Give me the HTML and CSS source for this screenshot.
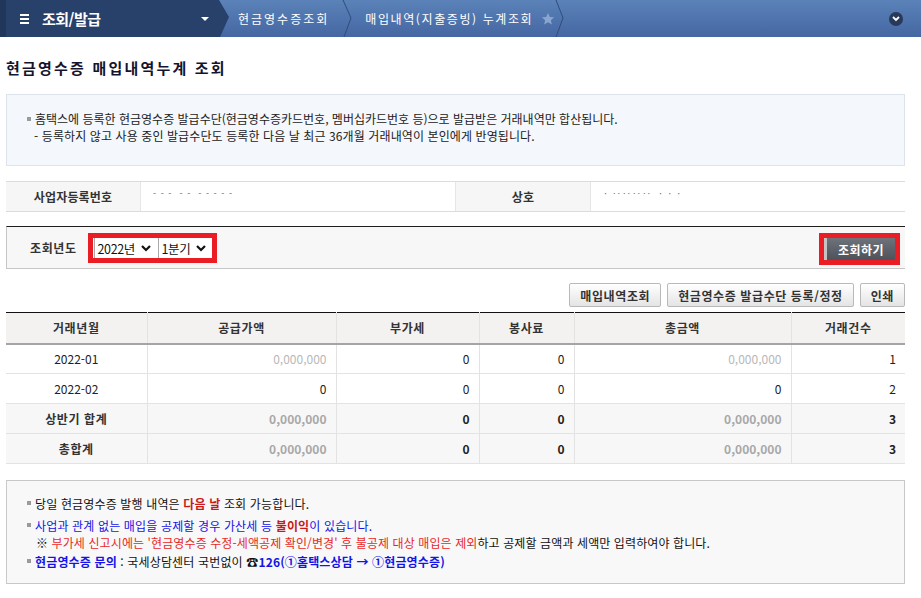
FILE: index.html
```html
<!DOCTYPE html>
<html lang="ko">
<head>
<meta charset="utf-8">
<title>현금영수증 매입내역누계 조회</title>
<link rel="stylesheet" href="styles.css">
</head>
<body>
<header class="topbar">
  <div class="menu">
    <span class="burger"><i></i><i></i><i></i></span>
    <span class="menu-title">조회/발급</span>
    <span class="menu-caret"></span>
  </div>
  <nav class="crumbs">
    <span class="crumb">현금영수증조회</span>
    <svg class="sep sep1" width="12" height="37" viewBox="0 0 12 37"><polyline points="1,0 9,18 2,37" fill="none" stroke="#2f4d7c" stroke-width="1"/></svg>
    <span class="crumb crumb2">매입내역(지출증빙) 누계조회</span>
    <svg class="star" width="14" height="14" viewBox="0 0 24 24"><path d="M12 1.5l3.1 7 7.4.6-5.6 5 1.7 7.4L12 17.6l-6.6 3.9 1.7-7.4-5.6-5 7.4-.6z" fill="#8aa6cf"/></svg>
    <svg class="sep" width="12" height="37" viewBox="0 0 12 37"><polyline points="1,0 8,18 1,37" fill="none" stroke="#2f4d7c" stroke-width="1"/></svg>
  </nav>
  <span class="circle-btn"><svg width="8" height="6" viewBox="0 0 8 6"><polyline points="1,1 4,4 7,1" fill="none" stroke="#fff" stroke-width="1.8"/></svg></span>
</header>

<main class="page">
  <h1 class="title">현금영수증 매입내역누계 조회</h1>

  <div class="info">
    <p class="bullet">홈택스에 등록한 현금영수증 발급수단(현금영수증카드번호, 멤버십카드번호 등)으로 발급받은 거래내역만 합산됩니다.</p>
    <p class="sub">- 등록하지 않고 사용 중인 발급수단도 등록한 다음 날 최근 36개월 거래내역이 본인에게 반영됩니다.</p>
  </div>

  <div class="biz">
    <div class="biz-label">사업자등록번호</div>
    <div class="biz-value masked">- - -&nbsp;&nbsp;- -&nbsp;&nbsp;- - - - -</div>
    <div class="biz-label">상호</div>
    <div class="biz-value masked">· ‥‥‥‥&nbsp;&nbsp;·&nbsp;·&nbsp;·</div>
  </div>

  <div class="search">
    <span class="search-label">조회년도</span>
    <div class="sel-box">
      <span class="sel sel-year">2022년 <svg width="10" height="8" viewBox="0 0 10 8"><polyline points="1,2 5,6 9,2" fill="none" stroke="#111" stroke-width="2.2"/></svg></span>
      <span class="sel sel-q">1분기 <svg width="10" height="8" viewBox="0 0 10 8"><polyline points="1,2 5,6 9,2" fill="none" stroke="#111" stroke-width="2.2"/></svg></span>
    </div>
    <div class="btn-box"><button class="btn-dark">조회하기</button></div>
  </div>

  <div class="actions">
    <button class="btn">매입내역조회</button>
    <button class="btn">현금영수증 발급수단 등록/정정</button>
    <button class="btn">인쇄</button>
  </div>

  <table class="grid">
    <colgroup>
      <col class="c1"><col class="c2"><col class="c3"><col class="c4"><col class="c5"><col class="c6">
    </colgroup>
    <thead>
      <tr><th>거래년월</th><th>공급가액</th><th>부가세</th><th>봉사료</th><th>총금액</th><th>거래건수</th></tr>
    </thead>
    <tbody>
      <tr><td class="c">2022-01</td><td class="r blur">0,000,000</td><td class="r">0</td><td class="r">0</td><td class="r blur">0,000,000</td><td class="r">1</td></tr>
      <tr><td class="c">2022-02</td><td class="r">0</td><td class="r">0</td><td class="r">0</td><td class="r">0</td><td class="r">2</td></tr>
      <tr class="sum"><th>상반기 합계</th><td class="r blur">0,000,000</td><td class="r">0</td><td class="r">0</td><td class="r blur">0,000,000</td><td class="r">3</td></tr>
      <tr class="sum"><th>총합계</th><td class="r blur">0,000,000</td><td class="r">0</td><td class="r">0</td><td class="r blur">0,000,000</td><td class="r">3</td></tr>
    </tbody>
  </table>

  <div class="notice">
    <p class="bullet">당일 현금영수증 발행 내역은 <b class="red">다음 날</b> 조회 가능합니다.</p>
    <p class="bullet blue">사업과 관계 없는 매입을 공제할 경우 가산세 등 <b class="red">불이익</b>이 있습니다.</p>
    <p class="note"><b class="black">※</b> <span class="red2">부가세 신고시에는 '현금영수증 수정-세액공제 확인/변경' 후 불공제 대상 매입은 제외</span><span class="black">하고 공제할 금액과 세액만 입력하여야 합니다.</span></p>
    <p class="bullet last"><b class="blue">현금영수증 문의</b> : 국세상담센터 국번없이 ☎<b class="blue">126(①홈택스상담 → ①현금영수증)</b></p>
  </div>
</main>
</body>
</html>
```
FILE: styles.css
```css
* { box-sizing: border-box; }
html, body { margin: 0; padding: 0; background: #fff; }
body {
  font-family: "Noto Sans CJK KR", "Noto Sans", sans-serif;
  font-size: 12px;
  color: #222;
  width: 921px;
}
p { margin: 0; }

/* top bar */
.topbar {
  height: 37px;
  display: flex;
  align-items: center;
  background: linear-gradient(#5b82b9, #4567a2);
}
.menu {
  width: 229px;
  height: 37px;
  display: flex;
  align-items: center;
  background: #27416b;
  border-left: 6px solid #213759;
  clip-path: polygon(0 0, 219px 0, 229px 17px, 220px 37px, 0 37px);
  flex: none;
}
.burger {
  display: flex;
  flex-direction: column;
  gap: 2px;
  margin-left: 14px;
  width: 9px;
}
.burger i { display: block; height: 2px; background: #fff; }
.menu-title {
  color: #fff;
  font-weight: bold;
  font-size: 15px;
  margin-left: 13px;
  letter-spacing: -0.5px;
}
.menu-caret {
  margin-left: 100px;
  width: 0; height: 0;
  border-left: 4px solid transparent;
  border-right: 4px solid transparent;
  border-top: 4px solid #fff;
}
.crumbs {
  display: flex;
  align-items: center;
  height: 37px;
  margin-left: 9px;
}
.crumb {
  color: #fff;
  font-size: 12px;
  letter-spacing: 2px;
}
.crumb2 { letter-spacing: 1.6px; margin-left: 11px; }
.sep { display: block; }
.sep1 { margin-left: 13px; }
.star { margin-left: 8px; margin-right: 0; }
.circle-btn {
  margin-left: auto;
  margin-right: 18px;
  width: 14px; height: 14px;
  border-radius: 50%;
  background: #28395a;
  display: flex;
  align-items: center;
  justify-content: center;
}

/* page */
.page { padding: 0 16px 0 6px; }
.title {
  margin: 21px 0 16px;
  font-size: 15px;
  line-height: 20px;
  letter-spacing: 2.2px;
  color: #14142e;
  font-weight: bold;
}

.bullet { position: relative; padding-left: 8px; }
.bullet::before {
  content: "";
  position: absolute;
  left: 0; top: 7px;
  width: 4px; height: 4px;
  background: #9a9a9a;
}

.info {
  background: #f4f7fb;
  border: 1px solid #dde3ea;
  padding: 15px 10px 21px 20px;
  line-height: 17px;
  letter-spacing: 0;
  color: #222;
}
.info .sub { padding-left: 7px; letter-spacing: 0.1px; }

.biz {
  margin-top: 15px;
  display: grid;
  grid-template-columns: 135px 315px 135px 1fr;
  border-top: 1px solid #dcdcdc;
  border-bottom: 1px solid #dcdcdc;
  height: 31px;
}
.biz-label {
  background: #f6f6f6;
  font-weight: bold;
  color: #333;
  display: flex;
  align-items: center;
  justify-content: center;
  border-right: 1px solid #e6e6e6;
  letter-spacing: 0.2px;
}
.biz-value {
  display: flex;
  align-items: center;
  padding-left: 12px;
  border-right: 1px solid #e6e6e6;
}
.biz-value:last-child { border-right: 0; }
.masked { color: #666; font-size: 9px; letter-spacing: 1px; padding-bottom: 6px; }

.search {
  margin-top: 14px;
  height: 43px;
  border-top: 1px solid #1e1e1e;
  border-bottom: 1px solid #c6c6c6;
  border-left: 1px solid #c6c6c6;
  background: #f7f7f7;
  display: flex;
  align-items: center;
  padding-left: 23px;
  padding-right: 5px;
}
.search-label {
  font-weight: bold;
  color: #333;
  letter-spacing: 0.6px;
}
.sel-box {
  margin-left: 11px;
  display: flex;
  border: 5px solid #ea1c24;
  background: #fff;
  height: 30px;
  margin-top: 1px;
}
.sel {
  display: flex;
  align-items: center;
  gap: 6px;
  height: 20px;
  border-left: 1px solid #a8a8a8;
  background: #fff;
  font-size: 12.5px;
  color: #111;
  letter-spacing: -0.4px;
}
.sel-year { width: 64px; padding-left: 3px; margin-left: 1px; }
.sel-q { width: 54px; padding-left: 3px; }
.btn-box {
  margin-left: auto;
  border: 5px solid #ea1c24;
  height: 32px;
  margin-top: 3px;
  background: #d0d0d0;
}
.btn-dark {
  display: block;
  height: 22px;
  width: 71px;
  border: 0;
  border-left: 3px solid #c4c4c4;
  background: linear-gradient(#6e727b, #4e525b);
  color: #fff;
  font-family: inherit;
  font-weight: bold;
  font-size: 12px;
  letter-spacing: 0.5px;
  padding: 0;
}

.actions {
  display: flex;
  justify-content: flex-end;
  gap: 6px;
  margin-top: 14px;
}
.btn {
  height: 24px;
  padding: 0 10px;
  border: 1px solid #b9b9b9;
  border-radius: 2px;
  background: linear-gradient(#ffffff, #e4e4e4);
  font-family: inherit;
  font-size: 12px;
  font-weight: bold;
  color: #333;
  letter-spacing: 0.6px;
}

.grid {
  margin-top: 5px;
  width: 899px;
  border-collapse: collapse;
  table-layout: fixed;
  border-top: 1px solid #111;
}
.c1 { width: 141px; } .c2 { width: 189px; } .c3 { width: 143px; }
.c4 { width: 95px; } .c5 { width: 217px; } .c6 { width: 114px; }
.grid th, .grid td {
  height: 30px;
  padding: 0 9px;
  border-left: 1px solid #e3e3e3;
  border-bottom: 1px solid #e3e3e3;
  white-space: nowrap;
}
.grid tr > :first-child { border-left: 0; }
.grid thead th {
  background: #f3f2f1;
  color: #333;
  font-weight: bold;
  border-bottom: 2px solid #a5a5a5;
  letter-spacing: 0.6px;
  height: 31px;
}
.grid .c { text-align: center; color: #222; }
.grid .r { text-align: right; color: #222; }
.grid .blur { color: #b8b8b8; }
.grid .sum th, .grid .sum td { background: #f7f7f7; font-weight: bold; }
.grid .sum th { color: #333; letter-spacing: 0.6px; }
.grid .sum .blur { color: #a8a8a8; }

.notice {
  margin-top: 16px;
  background: #f8f8f8;
  border: 1px solid #c8c8c8;
  padding: 14px 10px 13px 20px;
  line-height: 17px;
  letter-spacing: 0.15px;
  color: #111;
}
.notice .bullet::before { top: 6px; }
.notice p { margin-top: 5px; }
.notice p:first-child { margin-top: 0; }
.notice .note { margin-top: 0; padding-left: 9px; letter-spacing: 0.1px; }
.notice .last { margin-top: 2px; }
.notice .red { color: #c81a1a; }
.notice .blue { color: #1414e6; }
.notice .red2 { color: #e8281f; }
.notice .black { color: #111; }
```
